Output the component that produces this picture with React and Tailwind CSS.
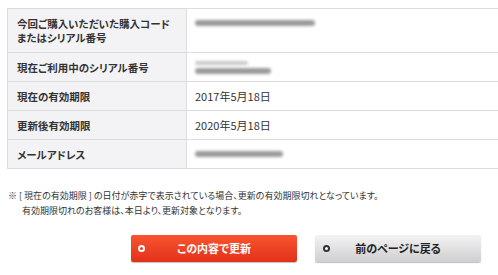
import React from "react";

const FONT = "font-['Hiragino_Kaku_Gothic_ProN','Noto_Sans_CJK_JP',sans-serif]";

function Blur({ w, lines = 1 }) {
  return (
    <div className="flex flex-col gap-[3px]">
      {lines > 1 && <div className="h-[4px] bg-[#c8c8c8] blur-[1.5px] rounded" style={{ width: w * 0.7 }} />}
      <div className="h-[6px] bg-[#9a9a9a] blur-[1.5px] rounded" style={{ width: w }} />
    </div>
  );
}

const rows = [
  { label: ["今回ご購入いただいた購入コード", "またはシリアル番号"], value: <Blur w={120} />, tall: true },
  { label: ["現在ご利用中のシリアル番号"], value: <Blur w={76} lines={2} /> },
  { label: ["現在の有効期限"], value: "2017年5月18日" },
  { label: ["更新後有効期限"], value: "2020年5月18日" },
  { label: ["メールアドレス"], value: <Blur w={88} /> },
];

function Bullet({ dark }) {
  return (
    <span
      className={`w-[7px] h-[7px] rounded-full border-[2px] ${dark ? "border-[#333] bg-white" : "border-white bg-[#e8391f]"}`}
    />
  );
}

export default function App() {
  return (
    <div className={`w-[498px] h-[275px] bg-white overflow-hidden ${FONT} [font-feature-settings:'palt'] text-[#333]`}>
      <div className="ml-[7px] mt-[8px] border-t border-l border-[#dcdcdc]">
        {rows.map((r, i) => (
          <div key={i} className={`grid grid-cols-[179px_1fr] border-b border-[#dcdcdc] ${r.tall ? "h-[44px]" : "h-[29px]"}`}>
            <div className="bg-[#f3f3f5] border-r border-[#dcdcdc] pl-[9px] flex flex-col justify-center gap-px text-[10.5px] font-bold leading-[13px]">
              {r.label.map((l) => (
                <div key={l}>{l}</div>
              ))}
            </div>
            <div className={`pl-[8px] flex text-[11px] leading-[14px] ${r.tall ? "items-start pt-[11px]" : "items-center"}`}>
              {r.value}
            </div>
          </div>
        ))}
      </div>

      <div className="mt-[19px] ml-[8px] text-[9px] leading-[15px] text-[#333]">
        <div>※ [ 現在の有効期限 ] の日付が赤字で表示されている場合、更新の有効期限切れとなっています。</div>
        <div className="pl-[14px]">有効期限切れのお客様は、本日より、更新対象となります。</div>
      </div>

      <div className="flex gap-[18px] ml-[131px] mt-[17px]">
        <button className="relative w-[166px] h-[27px] rounded-[2px] bg-gradient-to-b from-[#f8542f] to-[#e2301a] shadow-[0_1px_1px_rgba(0,0,0,0.25)] flex items-center justify-center text-white text-[11px] font-bold">
          <span className="absolute left-[7px] top-[10px] flex"><Bullet /></span>
          この内容で更新
        </button>
        <button className="relative w-[166px] h-[27px] rounded-[2px] bg-gradient-to-b from-[#f3f3f3] to-[#cfcfd1] shadow-[0_1px_1px_rgba(0,0,0,0.25)] flex items-center justify-center text-[#222] text-[11px] font-bold">
          <span className="absolute left-[8px] top-[10px] flex"><Bullet dark /></span>
          前のページに戻る
        </button>
      </div>
    </div>
  );
}
